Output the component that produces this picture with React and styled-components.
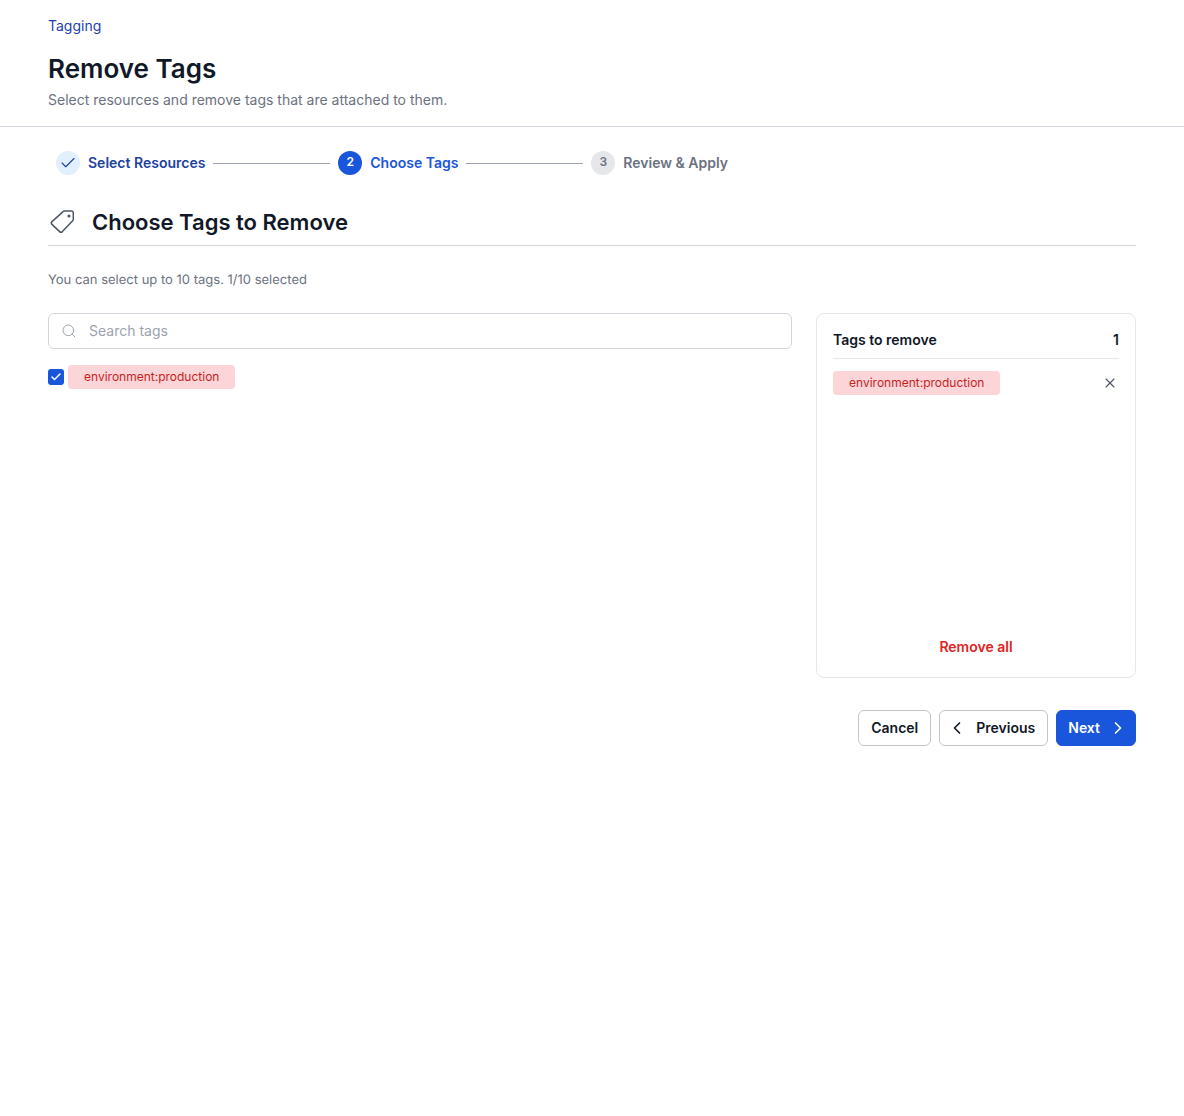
import React from "react";
import styled, { createGlobalStyle } from "styled-components";
import { Search, Check, X, ChevronLeft, ChevronRight } from "lucide-react";

const Global = createGlobalStyle`
  html, body { margin: 0; padding: 0; background: #fff; }
  * { box-sizing: border-box; }
  body { font-family: Inter, "Liberation Sans", sans-serif; color: #111827; }
`;

const Header = styled.header`
  padding: 16px 48px 16px;
  border-bottom: 1px solid #d1d5db;
`;
const Crumb = styled.a`
  display: block;
  font-size: 14px;
  line-height: 20px;
  color: #1e40af;
`;
const Title = styled.h1`
  margin: 15px 0 0;
  font-size: 26px;
  line-height: 36px;
  font-weight: 600;
  color: #111827;
`;
const Subtitle = styled.p`
  margin: 3px 0 0;
  font-size: 14px;
  line-height: 20px;
  color: #6b7280;
`;
const Main = styled.main`
  padding: 24px 48px 0;
`;
const Stepper = styled.ol`
  display: flex;
  align-items: center;
  list-style: none;
  margin: 0;
  padding: 0 8px;
  height: 24px;
  width: 672px;
  box-sizing: content-box;
`;
const Step = styled.li`
  display: flex;
  align-items: center;
  gap: 8px;
  font-size: 14px;
  line-height: 20px;
  font-weight: 600;
  white-space: nowrap;
  color: ${(p) => p.$color};
`;
const Bullet = styled.span`
  width: 24px;
  height: 24px;
  border-radius: 50%;
  display: flex;
  align-items: center;
  justify-content: center;
  padding-bottom: ${(p) => (p.$icon ? 0 : 2)}px;
  font-size: 12px;
  line-height: 16px;
  font-weight: 600;
  background: ${(p) => p.$bg};
  color: ${(p) => p.$fg};
`;
const Connector = styled.span`
  flex: 1;
  height: 1px;
  margin: 0 8px;
  background: #9ca3af;
`;
const SectionHead = styled.div`
  display: flex;
  align-items: center;
  gap: 18px;
  margin-top: 28px;
  padding: 0 0 4px 2px;
  border-bottom: 1px solid #d1d5db;
  height: 43px;
`;
const TagIcon = styled.svg`
  width: 24px;
  height: 24px;
  flex: none;
  fill: none;
  stroke: #4b5563;
  stroke-width: 1.5;
  stroke-linejoin: round;
`;
const SectionTitle = styled.h2`
  margin: 0;
  font-size: 22px;
  line-height: 32px;
  font-weight: 600;
  color: #111827;
`;
const Hint = styled.p`
  margin: 24px 0 0;
  font-size: 13px;
  text-rendering: geometricPrecision;
  line-height: 20px;
  color: #6b7280;
`;
const Columns = styled.div`
  display: flex;
  gap: 24px;
  margin-top: 23px;
`;
const Left = styled.div`
  flex: 1;
  min-width: 0;
`;
const SearchBox = styled.div`
  display: flex;
  align-items: center;
  gap: 12px;
  height: 36px;
  padding: 0 12px 1px;
  border: 1px solid #d1d5db;
  border-radius: 6px;
  color: #9ca3af;
  font-size: 14px;
`;
const TagRow = styled.div`
  display: flex;
  align-items: center;
  gap: 4px;
  margin-top: 16px;
`;
const Checkbox = styled.span`
  width: 16px;
  height: 16px;
  border-radius: 3px;
  background: #1a56db;
  color: #fff;
  display: flex;
  align-items: center;
  justify-content: center;
`;
const Pill = styled.span`
  display: inline-block;
  height: 24px;
  padding: 0 16px;
  border-radius: 4px;
  background: #fcd5d8;
  color: #c81e1e;
  font-size: 12px;
  line-height: 24px;
`;
const Panel = styled.aside`
  width: 320px;
  height: 365px;
  padding: 16px;
  border: 1px solid #e5e7eb;
  border-radius: 8px;
  display: flex;
  flex-direction: column;
`;
const PanelHead = styled.div`
  display: flex;
  justify-content: space-between;
  align-items: center;
  height: 29px;
  padding-bottom: 9px;
  border-bottom: 1px solid #e5e7eb;
  font-size: 14px;
  line-height: 20px;
  font-weight: 600;
  color: #111827;
`;
const PanelRow = styled.div`
  display: flex;
  justify-content: space-between;
  align-items: center;
  margin-top: 12px;
  padding-right: 1px;
  color: #4b5563;
`;
const RemoveAll = styled.button`
  margin-top: auto;
  margin-bottom: 3px;
  border: 0;
  background: none;
  font: 600 14px/20px Inter, sans-serif;
  color: #e02424;
`;
const Footer = styled.div`
  display: flex;
  justify-content: flex-end;
  gap: 8px;
  margin-top: 32px;
`;
const Button = styled.button`
  height: 36px;
  display: flex;
  align-items: center;
  gap: ${(p) => p.$gap || 0}px;
  padding: 0 ${(p) => p.$right}px 0 ${(p) => p.$left}px;
  border-radius: 6px;
  font: 600 14px/20px Inter, sans-serif;
  border: 1px solid ${(p) => (p.$primary ? "#1a56db" : "#c4c4c8")};
  background: ${(p) => (p.$primary ? "#1a56db" : "#fff")};
  color: ${(p) => (p.$primary ? "#fff" : "#111827")};
`;

export default function App() {
  return (
    <>
      <Global />
      <Header>
        <Crumb>Tagging</Crumb>
        <Title>Remove Tags</Title>
        <Subtitle>Select resources and remove tags that are attached to them.</Subtitle>
      </Header>
      <Main>
        <Stepper>
          <Step $color="#1e429f">
            <Bullet $icon $bg="#e1effe" $fg="#1e429f"><Check size={18} strokeWidth={1.5} /></Bullet>
            Select Resources
          </Step>
          <Connector />
          <Step $color="#1a56db">
            <Bullet $bg="#1a56db" $fg="#fff">2</Bullet>
            Choose Tags
          </Step>
          <Connector />
          <Step $color="#6b7280">
            <Bullet $bg="#e5e7eb" $fg="#6b7280">3</Bullet>
            Review &amp; Apply
          </Step>
        </Stepper>
        <SectionHead>
          <TagIcon viewBox="0 0 24 24">
            <path d="M14.5 1H21.3a2 2 0 0 1 2 2V9.3a2 2 0 0 1-.6 1.4L12.4 21.6a2 2 0 0 1-2.8 0L2 14.4a2 2 0 0 1 0-2.8L13.1 1.6a2 2 0 0 1 1.4-.6z" />
            <circle cx="19" cy="6" r="0.8" fill="#4b5563" />
          </TagIcon>
          <SectionTitle>Choose Tags to Remove</SectionTitle>
        </SectionHead>
        <Hint>You can select up to 10 tags. 1/10 selected</Hint>
        <Columns>
          <Left>
            <SearchBox>
              <Search size={16} strokeWidth={1.5} />
              Search tags
            </SearchBox>
            <TagRow>
              <Checkbox><Check size={12} strokeWidth={3} /></Checkbox>
              <Pill>environment:production</Pill>
            </TagRow>
          </Left>
          <Panel>
            <PanelHead>
              <span>Tags to remove</span>
              <span>1</span>
            </PanelHead>
            <PanelRow>
              <Pill>environment:production</Pill>
              <X size={16} strokeWidth={1.6} />
            </PanelRow>
            <RemoveAll>Remove all</RemoveAll>
          </Panel>
        </Columns>
        <Footer>
          <Button $left={12} $right={12}>Cancel</Button>
          <Button $left={7} $right={12} $gap={9}><ChevronLeft size={20} strokeWidth={2} />Previous</Button>
          <Button $primary $left={11} $right={7} $gap={8}>Next<ChevronRight size={20} strokeWidth={2} /></Button>
        </Footer>
      </Main>
    </>
  );
}
